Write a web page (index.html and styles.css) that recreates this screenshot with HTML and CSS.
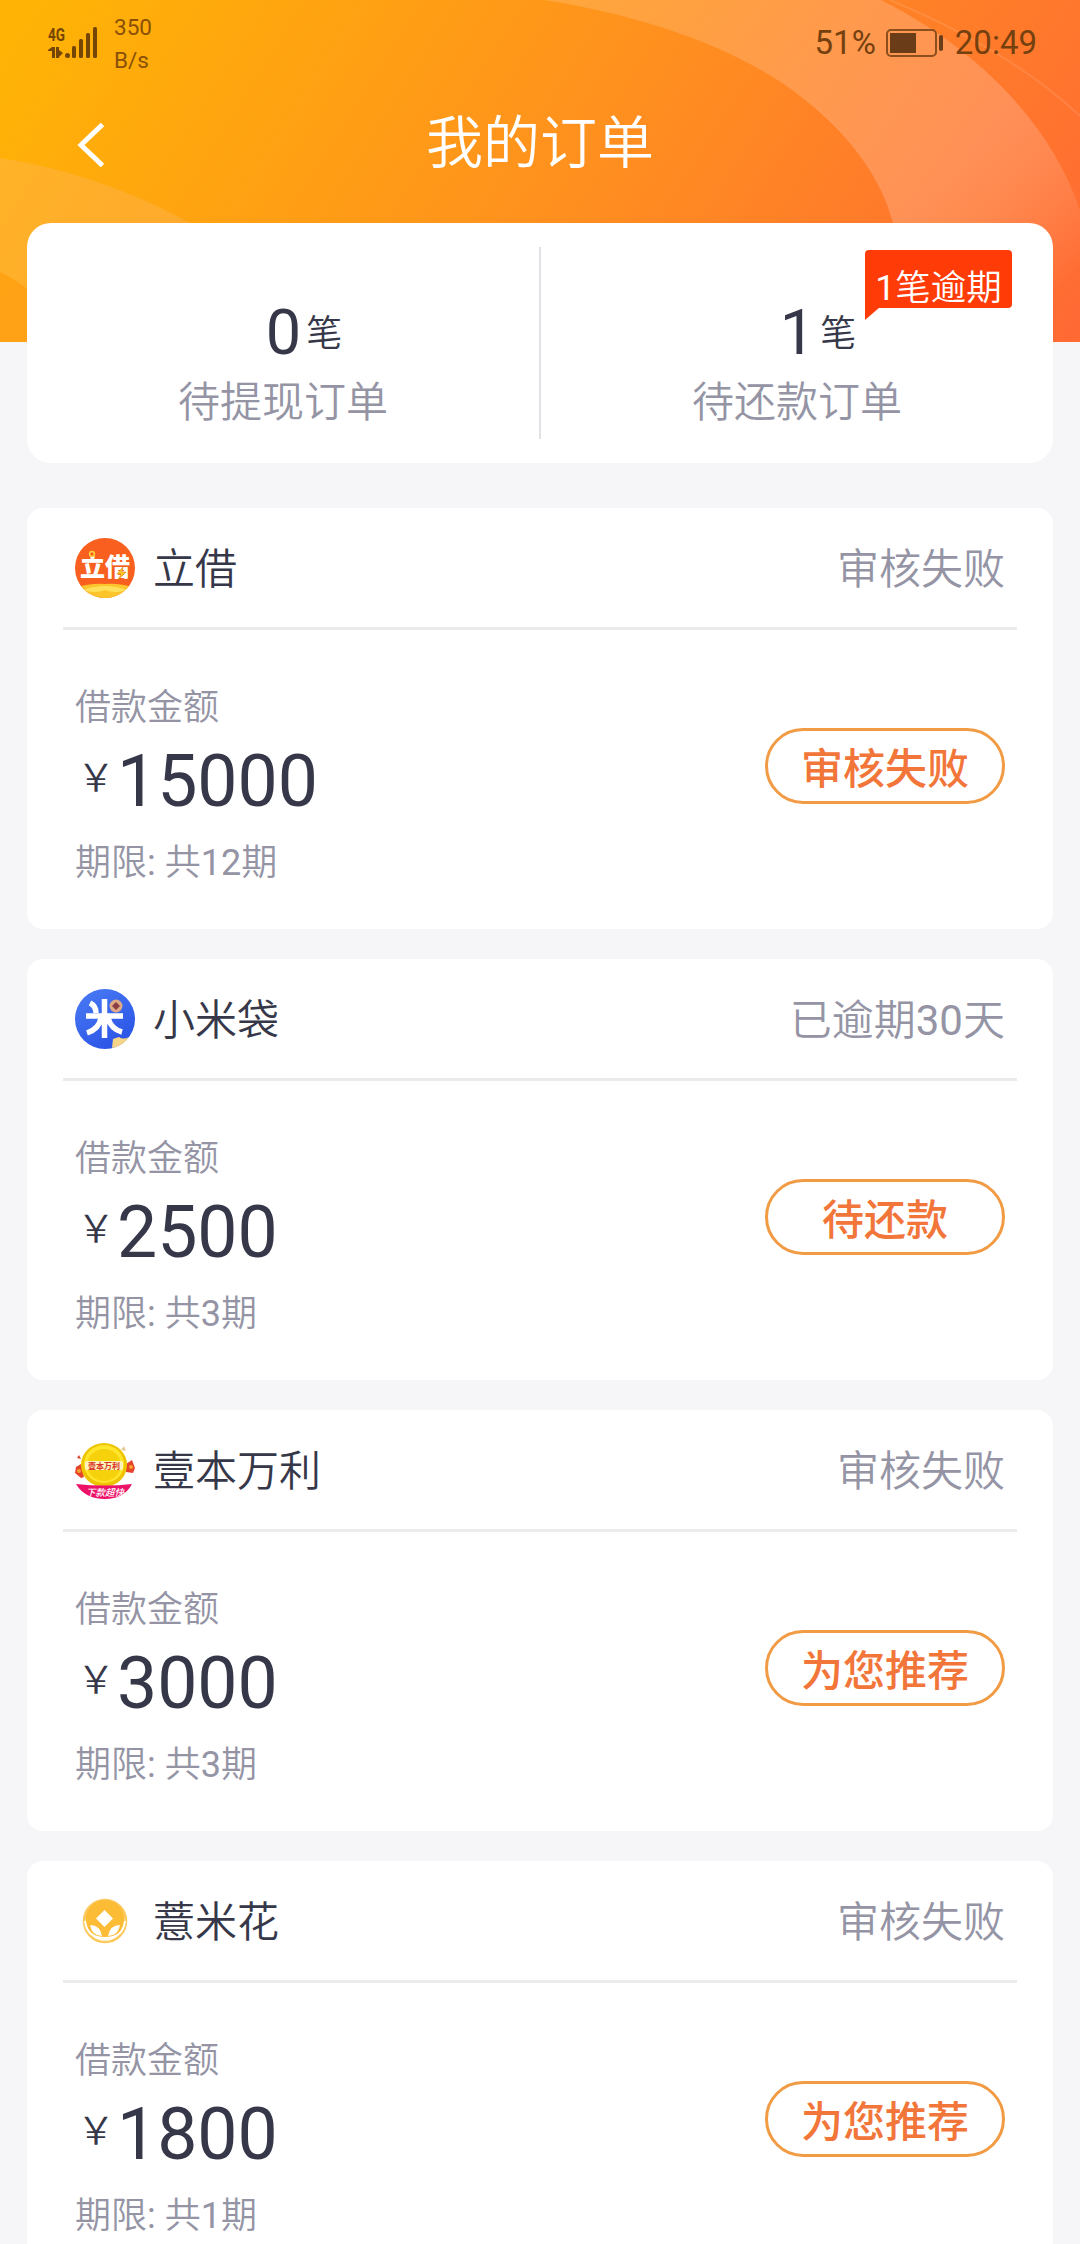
FILE: index.html
```html
<!DOCTYPE html>
<html lang="zh-CN">
<head>
<meta charset="utf-8">
<title>我的订单</title>
<link rel="stylesheet" href="styles.css">
</head>
<body>
<div class="screen">
  <header class="hero">
    <svg class="hero-art" viewBox="0 0 1080 342" preserveAspectRatio="none">
      <defs>
        <linearGradient id="sky" gradientUnits="userSpaceOnUse" x1="0" y1="40" x2="920" y2="620">
          <stop offset="0" stop-color="#ffb405"/>
          <stop offset=".5" stop-color="#ff911e"/>
          <stop offset="1" stop-color="#ff6835"/>
        </linearGradient>
        <linearGradient id="ring" gradientUnits="userSpaceOnUse" x1="700" y1="0" x2="1000" y2="342">
          <stop offset="0" stop-color="#fff" stop-opacity=".15"/>
          <stop offset=".65" stop-color="#ffc8b8" stop-opacity=".3"/>
          <stop offset="1" stop-color="#fff" stop-opacity="0"/>
        </linearGradient>
      </defs>
      <rect width="1080" height="342" fill="url(#sky)"/>
      <path d="M544 0C640 15 730 45 792 90C850 132 882 180 893 223L900 342H1080V210C1055 135 990 55 881 0Z" fill="url(#ring)"/>
      <path d="M0 158C65 168 130 190 190 223L230 342H0Z" fill="#ffb870" fill-opacity=".3"/>
      <path d="M0 272Q20 281 40 300V342H0Z" fill="#ff9500" fill-opacity=".5"/>
      <path d="M890 0Q1010 50 1080 116" fill="none" stroke="#fff" stroke-opacity=".1" stroke-width="2"/>
    </svg>
    <div class="status">
      <div class="status-left">
        <svg class="signal" width="52" height="36" viewBox="0 -4 52 36" fill="#744505">
          <text x="0" y="14" class="net" textLength="17" lengthAdjust="spacingAndGlyphs">4G</text>
          <path d="M0 23L4 20H7V31H4V24H0ZM8 20H11V23L15 26L11 30V31H8Z"/>
          <circle cx="19.500" cy="28.500" r="2.500"/>
          <rect x="24" y="19" width="4" height="12" rx="1.500"/>
          <rect x="31" y="12" width="4" height="19" rx="1.500"/>
          <rect x="38" y="6" width="4" height="25" rx="1.500"/>
          <rect x="45" y="0" width="4" height="31" rx="1.500"/>
        </svg>
        <div class="speed"><span>350</span><span>B/s</span></div>
      </div>
      <div class="status-right">
        <span>51%</span>
        <svg class="battery" width="58" height="28" viewBox="0 0 58 28">
          <rect x="1" y="1" width="49" height="26" rx="4" fill="none" stroke="#8a4f1c" stroke-width="2"/>
          <rect x="4" y="4" width="26" height="20" fill="#6a3d18"/>
          <rect x="53" y="6" width="4" height="16" rx="2" fill="#6a3d18"/>
        </svg>
        <span>20:49</span>
      </div>
    </div>
    <nav class="nav">
      <svg class="back" width="28" height="44" viewBox="0 0 28 44" fill="none" stroke="#fff" stroke-width="5"><path d="M25.500 1.500L4 22L25.500 42.500"/></svg>
      <h1 class="title">我的订单</h1>
    </nav>
  </header>

  <section class="summary">
    <div class="stat">
      <div class="count"><b>0</b><span>笔</span></div>
      <div class="stat-name">待提现订单</div>
    </div>
    <div class="split"></div>
    <div class="stat">
      <div class="count"><b>1</b><span>笔</span></div>
      <div class="stat-name">待还款订单</div>
      <div class="flag"><span class="num">1</span>笔逾期</div>
    </div>
  </section>

  <main class="orders">
    <article class="card">
      <div class="card-head">
        <svg class="logo" viewBox="0 0 60 60">
          <defs><clipPath id="disc"><circle cx="30" cy="30" r="30"/></clipPath></defs>
          <g clip-path="url(#disc)">
            <rect width="60" height="60" fill="#f9601f"/>
            <path d="M0 50Q15 45 30 46Q45 45 60 50V60H0Z" fill="#fcc52c"/>
            <path d="M8 52Q30 44 52 52Q40 56 30 52Q20 56 8 52Z" fill="#ffe05a"/>
          </g>
          <text x="5" y="38" class="logo-lijie">立借</text>
          <circle cx="17" cy="16" r="2.400" fill="#f9601f" stroke="#ffd23c" stroke-width="1.500"/>
          <path d="M48 29L42 36H46L43 42L51 34H47Z" fill="#ffc62a" stroke="#d97814" stroke-width=".6"/>
        </svg>
        <h2 class="name">立借</h2>
        <span class="state">审核失败</span>
      </div>
      <div class="card-body">
        <div class="info">
          <div class="label">借款金额</div>
          <div class="amount"><i>￥</i><b>15000</b></div>
          <div class="term">期限<span class="num">: </span>共<span class="num">12</span>期</div>
        </div>
        <button class="action">审核失败</button>
      </div>
    </article>

    <article class="card">
      <div class="card-head">
        <svg class="logo" viewBox="0 0 60 60">
          <defs>
            <linearGradient id="blue" x1="0" y1="0" x2=".6" y2="1"><stop offset="0" stop-color="#4b7cf5"/><stop offset="1" stop-color="#2b55e6"/></linearGradient>
          </defs>
          <circle cx="30" cy="30" r="30" fill="url(#blue)"/>
          <g fill="none" stroke="#fff" stroke-width="5.500">
            <path d="M29.500 10V49M11 27H48M15 14Q21 17 21 24M26 29Q24 40 12 44M33 29Q36 40 47 43"/>
          </g>
          <circle cx="41" cy="17" r="6.500" fill="#dfaa85"/>
          <path d="M41 13L45 17L41 21L37 17Z" fill="#8a3f45"/>
          <path d="M37 59L38 50L44 48Q48 51 54 48Q48 57 37 59Z" fill="#f6d586"/>
        </svg>
        <h2 class="name">小米袋</h2>
        <span class="state">已逾期<span class="num">30</span>天</span>
      </div>
      <div class="card-body">
        <div class="info">
          <div class="label">借款金额</div>
          <div class="amount"><i>￥</i><b>2500</b></div>
          <div class="term">期限<span class="num">: </span>共<span class="num">3</span>期</div>
        </div>
        <button class="action">待还款</button>
      </div>
    </article>

    <article class="card">
      <div class="card-head">
        <svg class="logo" viewBox="0 0 60 60">
          <path d="M2 18L4 15L6 19Z" fill="#d8432c"/>
          <path d="M1 27L6 24L9 37L6 38L0 33ZM51 24L57 20L60 28L58 33L51 32Z" fill="#e6432c"/>
          <circle cx="4" cy="31" r="2" fill="#f7a32e"/><circle cx="56" cy="27" r="2" fill="#f7a32e"/>
          <path d="M46 10L49 6L51 11Z" fill="#e3c99a"/>
          <ellipse cx="29" cy="25" rx="23" ry="22" fill="#eec400"/>
          <ellipse cx="29" cy="24" rx="20" ry="19" fill="#ffe52b"/>
          <ellipse cx="29" cy="25" rx="17" ry="16" fill="#f6d20d"/>
          <rect x="10" y="21" width="38" height="9" rx="2" fill="#fff3bd"/>
          <text x="13" y="29" class="logo-yiben">壹本万利</text>
          <path d="M1 44Q30 47 57 44Q49 59 30 59Q10 59 1 44Z" fill="#ec1268"/>
          <text x="11" y="55.500" class="logo-ribbon">下款超快</text>
        </svg>
        <h2 class="name">壹本万利</h2>
        <span class="state">审核失败</span>
      </div>
      <div class="card-body">
        <div class="info">
          <div class="label">借款金额</div>
          <div class="amount"><i>￥</i><b>3000</b></div>
          <div class="term">期限<span class="num">: </span>共<span class="num">3</span>期</div>
        </div>
        <button class="action">为您推荐</button>
      </div>
    </article>

    <article class="card">
      <div class="card-head">
        <svg class="logo" viewBox="0 0 60 60">
          <circle cx="30" cy="30" r="21" fill="#fff" stroke="#fcc95c" stroke-width="2.500"/>
          <circle cx="30" cy="28.500" r="19.500" fill="#fcbc35"/>
          <path d="M29.500 19L38 27.500L29.500 36L21 27.500Z" fill="#fff"/>
          <path d="M15 34Q25 34 27 45Q17 45 15 34ZM45 34Q35 34 33 45Q43 45 45 34Z" fill="#fff"/>
          <path d="M10 30Q12 47 30 47Q48 47 50 30" fill="none" stroke="#fff" stroke-width="2"/>
        </svg>
        <h2 class="name">薏米花</h2>
        <span class="state">审核失败</span>
      </div>
      <div class="card-body">
        <div class="info">
          <div class="label">借款金额</div>
          <div class="amount"><i>￥</i><b>1800</b></div>
          <div class="term">期限<span class="num">: </span>共<span class="num">1</span>期</div>
        </div>
        <button class="action">为您推荐</button>
      </div>
    </article>
  </main>
</div>
</body>
</html>
```

FILE: styles.css
```css
* { box-sizing: border-box; }

body {
  margin: 0;
  background: #f6f6f9;
  font-family: Roboto, "Noto Sans CJK SC", sans-serif;
  font-weight: 350;
  color: #363849;
}

.screen {
  width: 1080px;
  height: 2244px;
  overflow: hidden;
}

.num { font-weight: 400; }

.hero {
  position: relative;
  height: 342px;
}

.hero-art {
  position: absolute;
  inset: 0;
  width: 100%;
  height: 100%;
}

.status {
  position: relative;
  display: flex;
  justify-content: space-between;
  height: 86px;
  padding: 11px 43px 0 48px;
  font-weight: 400;
  color: #74400f;
}

.status-left {
  display: flex;
  gap: 14px;
}

.signal {
  margin-top: 12px;
  overflow: visible;
}

.net {
  font: 700 18px Roboto, sans-serif;
}

.speed {
  display: flex;
  flex-direction: column;
  font-size: 22.500px;
  line-height: 32.500px;
  color: #8a4f08;
}

.status-right {
  display: flex;
  align-items: center;
  gap: 10px;
  height: 64px;
  font-size: 33px;
  line-height: 40px;
}

.battery { margin-right: 1px; }

.nav {
  position: relative;
  display: grid;
  grid-template-columns: 120px 1fr 120px;
  align-items: center;
  height: 116px;
}

.back {
  margin: 2px 0 0 77px;
}

.title {
  margin: 0;
  font-size: 57px;
  font-weight: 350;
  line-height: 80px;
  text-align: center;
  color: #fff;
}

.summary {
  position: relative;
  display: grid;
  grid-template-columns: 1fr 2px 1fr;
  height: 240px;
  margin: -119px 27px 0;
  border-radius: 24px;
  background: #fff;
}

.split {
  height: 192px;
  margin-top: 24px;
  background: #e2e2e6;
}

.stat {
  position: relative;
  padding-top: 73px;
  text-align: center;
}

.count {
  display: flex;
  justify-content: center;
  gap: 5px;
  height: 74px;
  padding-left: 42px;
  line-height: 74px;
}

.count b {
  font-size: 63px;
  font-weight: 400;
}

.count span {
  font-size: 36px;
  line-height: 76px;
}

.stat-name {
  font-size: 42px;
  line-height: 66px;
  color: #9494a5;
}

.flag {
  position: absolute;
  top: 27px;
  left: 324px;
  width: 147px;
  height: 58px;
  padding-top: 13px;
  border-radius: 4px 4px 4px 0;
  background: #ff3b08;
  color: #fff;
  font-size: 35.500px;
  line-height: 50px;
}

.flag::after {
  content: "";
  position: absolute;
  left: 0;
  top: 57px;
  border-top: 13px solid #ff3b08;
  border-right: 15px solid transparent;
}

.orders {
  display: grid;
  gap: 30px;
  padding: 45px 27px 0;
}

.card {
  height: 421px;
  padding: 0 36px;
  border-radius: 16px;
  background: #fff;
}

.card-head {
  display: flex;
  align-items: center;
  height: 122px;
  padding: 0 12px;
  border-bottom: 3px solid #ebebed;
}

.logo {
  width: 60px;
  height: 60px;
  margin-top: 1px;
  overflow: visible;
}

.logo-lijie {
  font: 900 25px "Noto Sans CJK SC", sans-serif;
  fill: #fff;
}

.logo-yiben {
  font: 700 8px "Noto Sans CJK SC", sans-serif;
  fill: #d7321f;
}

.logo-ribbon {
  font: italic 500 9.500px "Noto Sans CJK SC", sans-serif;
  fill: #fff;
}

.name {
  flex: 1;
  margin: -4px 0 0 18px;
  font-size: 42px;
  font-weight: 350;
}

.state {
  margin-top: -4px;
  font-size: 42px;
  color: #9494a5;
}

.card-body {
  display: flex;
  justify-content: space-between;
  padding: 50px 12px 0;
}

.label,
.term {
  font-size: 36px;
  line-height: 56px;
  color: #9494a5;
}

.amount {
  display: flex;
  align-items: flex-start;
  height: 99px;
}

.amount i {
  width: 42px;
  font-family: "Noto Sans CJK SC", sans-serif;
  font-size: 38px;
  font-style: normal;
  line-height: 77px;
  text-align: center;
}

.amount b {
  font-size: 71.500px;
  font-weight: 400;
  line-height: 92px;
}

.action {
  width: 240px;
  height: 76px;
  margin-top: 48px;
  padding: 8px 0 0;
  border: 3px solid #f29b45;
  border-radius: 38px;
  background: #fff;
  color: #f2753a;
  font: 500 42px/62px Roboto, "Noto Sans CJK SC", sans-serif;
}
```
